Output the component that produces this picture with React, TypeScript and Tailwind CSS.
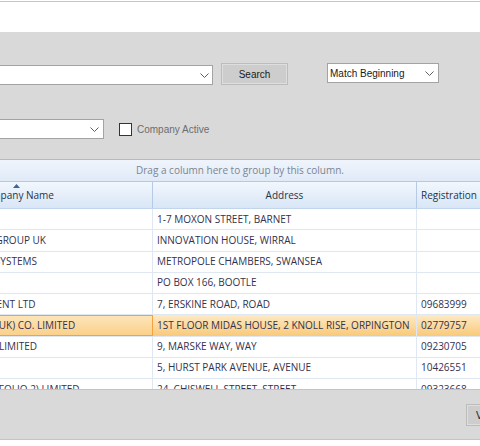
import React from "react";

const Chevron = () => (
  <svg width="9" height="5" viewBox="0 0 9 5" className="shrink-0">
    <polyline points="0.5,0.5 4.5,4.5 8.5,0.5" fill="none" stroke="#5f5f5f" strokeWidth="1" />
  </svg>
);

type Row = { company: string; address: string; reg: string };

const rows: Row[] = [
  { company: "MOXON LTD", address: "1-7 MOXON STREET, BARNET", reg: "" },
  { company: "BALANCE INNOVATION GROUP UK", address: "INNOVATION HOUSE, WIRRAL", reg: "" },
  { company: "METROPOLE BUSINESS SYSTEMS", address: "METROPOLE CHAMBERS, SWANSEA", reg: "" },
  { company: "BOOTLE MARINE", address: "PO BOX 166, BOOTLE", reg: "" },
  { company: "WESTMOOR DEVELOPMENT LTD", address: "7, ERSKINE ROAD, ROAD", reg: "09683999" },
  { company: "MILES INTERNATIONAL (UK) CO. LIMITED", address: "1ST FLOOR MIDAS HOUSE, 2 KNOLL RISE, ORPINGTON", reg: "02779757" },
  { company: "TEESSIDE ENGINEERING LIMITED", address: "9, MARSKE WAY, WAY", reg: "09230705" },
  { company: "HURST PARK", address: "5, HURST PARK AVENUE, AVENUE", reg: "10426551" },
  { company: "ELM INVESTMENT (PORTFOLIO 2) LIMITED", address: "24, CHISWELL STREET, STREET", reg: "09323668" },
];

export default function App() {
  return (
    <div className="w-[480px] h-[446px] overflow-hidden bg-white flex flex-col font-['Liberation_Sans',Arial,sans-serif] text-[10px] text-[#1a1a1a]">
      <div className="h-[1px] shrink-0 bg-white" />
      <div className="h-[1px] shrink-0 bg-[#a6cdf0]" />
      <div className="h-[30px] shrink-0 bg-white" />

      <div className="h-[407px] shrink-0 bg-[#d9d9d9] flex flex-col">
        {/* search row */}
        <div className="mt-[31px] h-[22px] flex items-start shrink-0">
          <div className="ml-[-20px] mt-[2px] w-[233px] h-[20px] bg-white border border-[#a3a3a3] flex items-center justify-end pr-[3px]">
            <Chevron />
          </div>
          <button className="ml-[8px] w-[67px] h-[22px] bg-[#cdcdcd] border border-[#bcbcbc] shadow-[inset_0_0_0_1px_#dedede] flex items-center justify-center text-[#1a1a1a]">
            Search
          </button>
          <div className="ml-[39px] w-[112px] h-[20px] bg-white border border-[#a3a3a3] flex items-center justify-between pl-[2px] pr-[4px]">
            <span>Match Beginning</span>
            <Chevron />
          </div>
        </div>

        {/* second row */}
        <div className="mt-[34px] h-[20px] flex items-center shrink-0">
          <div className="ml-[-20px] w-[124px] h-[20px] bg-white border border-[#a3a3a3] flex items-center justify-end pr-[4px]">
            <Chevron />
          </div>
          <div className="ml-[15px] w-[13px] h-[13px] bg-white border border-[#333333]" />
          <span className="ml-[5px] text-[#6d6d6d]">Company Active</span>
        </div>

        {/* grid */}
        <div className="mt-[20px] h-[230px] shrink-0 overflow-hidden bg-white border-t border-[#a9bdd6] flex flex-col font-['Open_Sans',sans-serif]">
          <div className="h-[22px] shrink-0 bg-gradient-to-b from-[#f0f5fc] to-[#e0eaf7] border-b border-[#b3c9e4] flex items-center justify-center text-[#7c8591]">
            Drag a column here to group by this column.
          </div>
          <div className="ml-[-119px] w-[736px] flex flex-col">
            <div className="h-[27px] flex bg-gradient-to-b from-[#f2f7fd] to-[#d9e6f6] border-b border-[#c3d5ea] text-[#24334a]">
              <div className="relative w-[272px] shrink-0 border-r border-[#b5cbe5] flex items-center justify-center">
                <svg width="7" height="4" viewBox="0 0 7 4" className="absolute top-[2px] left-[132px]">
                  <polygon points="3.5,0 7,4 0,4" fill="#3d6597" />
                </svg>
                Company Name
              </div>
              <div className="w-[264px] shrink-0 border-r border-[#b5cbe5] flex items-center justify-center">Address</div>
              <div className="w-[200px] shrink-0 flex items-center pl-[4px]">Registration</div>
            </div>
            {rows.map((r, i) => {
              const sel = i === 5;
              return (
                <div
                  key={i}
                  className={
                    "h-[21.25px] shrink-0 flex border-b border-[#dfe7f2] text-[#33324d] whitespace-nowrap " +
                    (sel ? "bg-gradient-to-b from-[#feeac4] to-[#f9c978]" : "bg-white")
                  }
                >
                  <div
                    className={
                      "w-[272px] shrink-0 overflow-hidden flex items-center pl-[4px] " +
                      (sel ? "border border-[#f4a140] bg-gradient-to-b from-[#fde5b8] to-[#fbd08a]" : "border-r border-[#dfe7f2]")
                    }
                  >
                    {r.company}
                  </div>
                  <div className="w-[264px] shrink-0 overflow-hidden flex items-center pl-[4px] border-r border-[#dfe7f2]">
                    {r.address}
                  </div>
                  <div className="w-[200px] shrink-0 overflow-hidden flex items-center pl-[4px]">{r.reg}</div>
                </div>
              );
            })}
          </div>
        </div>

        {/* bottom panel */}
        <div className="flex-1 border-t border-[#c3c3c3] flex items-start">
          <button className="ml-[466px] mt-[14px] w-[75px] h-[22px] shrink-0 bg-[#cdcdcd] border border-[#bcbcbc] shadow-[inset_0_0_0_1px_#dedede] flex items-center justify-center text-[#1a1a1a] whitespace-nowrap">
            View Details
          </button>
        </div>
      </div>

      <div className="h-[1px] shrink-0 bg-[#a6cdf0]" />
      <div className="flex-1 bg-white" />
    </div>
  );
}
